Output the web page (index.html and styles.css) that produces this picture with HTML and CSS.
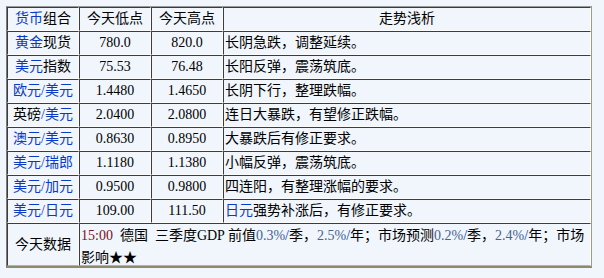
FILE: index.html
```html
<!DOCTYPE html>
<html lang="zh-CN">
<head>
<meta charset="utf-8">
<title>走势浅析</title>
<link rel="stylesheet" href="styles.css">
</head>
<body>
<table class="quotes">
  <colgroup>
    <col class="c-name"><col class="c-num"><col class="c-num"><col class="c-note">
  </colgroup>
  <tr class="head">
    <td><span class="lk">货币</span>组合</td>
    <td>今天低点</td>
    <td>今天高点</td>
    <td>走势浅析</td>
  </tr>
  <tr>
    <td class="name"><span class="lk">黄金</span>现货</td>
    <td class="num">780.0</td>
    <td class="num">820.0</td>
    <td class="note">长阴急跌，调整延续。</td>
  </tr>
  <tr>
    <td class="name"><span class="lk">美元</span>指数</td>
    <td class="num">75.53</td>
    <td class="num">76.48</td>
    <td class="note">长阳反弹，震荡筑底。</td>
  </tr>
  <tr>
    <td class="name lk">欧元/美元</td>
    <td class="num">1.4480</td>
    <td class="num">1.4650</td>
    <td class="note">长阴下行，整理跌幅。</td>
  </tr>
  <tr>
    <td class="name">英磅<span class="lk">/美元</span></td>
    <td class="num">2.0400</td>
    <td class="num">2.0800</td>
    <td class="note">连日大暴跌，有望修正跌幅。</td>
  </tr>
  <tr>
    <td class="name lk">澳元/美元</td>
    <td class="num">0.8630</td>
    <td class="num">0.8950</td>
    <td class="note">大暴跌后有修正要求。</td>
  </tr>
  <tr>
    <td class="name lk">美元/瑞郎</td>
    <td class="num">1.1180</td>
    <td class="num">1.1380</td>
    <td class="note">小幅反弹，震荡筑底。</td>
  </tr>
  <tr>
    <td class="name lk">美元/加元</td>
    <td class="num">0.9500</td>
    <td class="num">0.9800</td>
    <td class="note">四连阳，有整理涨幅的要求。</td>
  </tr>
  <tr>
    <td class="name lk">美元/日元</td>
    <td class="num">109.00</td>
    <td class="num">111.50</td>
    <td class="note"><span class="lk">日元</span>强势补涨后，有修正要求。</td>
  </tr>
  <tr class="data">
    <td class="name">今天数据</td>
    <td class="note" colspan="3"><div class="data-text"><span class="time">15:00</span>&nbsp; 德国&nbsp; 三季度GDP 前值<span class="pct">0.3%</span><span class="lk">/</span>季，<span class="pct">2.5%</span><span class="lk">/</span>年；市场预测<span class="pct">0.2%</span><span class="lk">/</span>季，<span class="pct">2.4%</span><span class="lk">/</span>年；市场影响<span class="stars">★★</span></div></td>
  </tr>
</table>
</body>
</html>
```

FILE: styles.css
```css
html, body {
  background: #f0f6fc;
}
body {
  margin: 0;
  padding: 6px;
  font-family: "Liberation Serif", "Noto Sans CJK SC", serif;
  font-size: 14px;
  color: #000;
}
.quotes {
  border-collapse: separate;
  border-spacing: 0;
  width: 586px;
  table-layout: fixed;
  border-top: 1px solid #9a9a9a;
  border-left: 1px solid #7a7a7a;
  border-right: 1px solid #a09c80;
  border-bottom: 2px solid #8e8a70;
}
.c-name, .c-num { width: 72px; }
.quotes td {
  border-top: 1px solid #3c3c3c;
  border-left: 1px solid #3c3c3c;
  border-right: 1px solid #fcfcfc;
  border-bottom: 1px solid #fcfcfc;
  padding: 0 1px;
  height: 22px;
  line-height: 22px;
  text-align: center;
  white-space: nowrap;
}
.quotes td.note {
  text-align: left;
  white-space: normal;
}
.quotes .data td {
  border-bottom: 1px solid #b8b49a;
  height: 41px;
  line-height: 21px;
}
.head td:last-child { text-align: center; }
.data-text {
  height: 40px;
  padding-top: 1px;
  overflow: hidden;
}
.stars { font-family: "Noto Sans CJK SC", sans-serif; }
.lk { color: #0a3bc4; }
.time { color: #7a1020; }
.pct { color: #46628e; }
```
